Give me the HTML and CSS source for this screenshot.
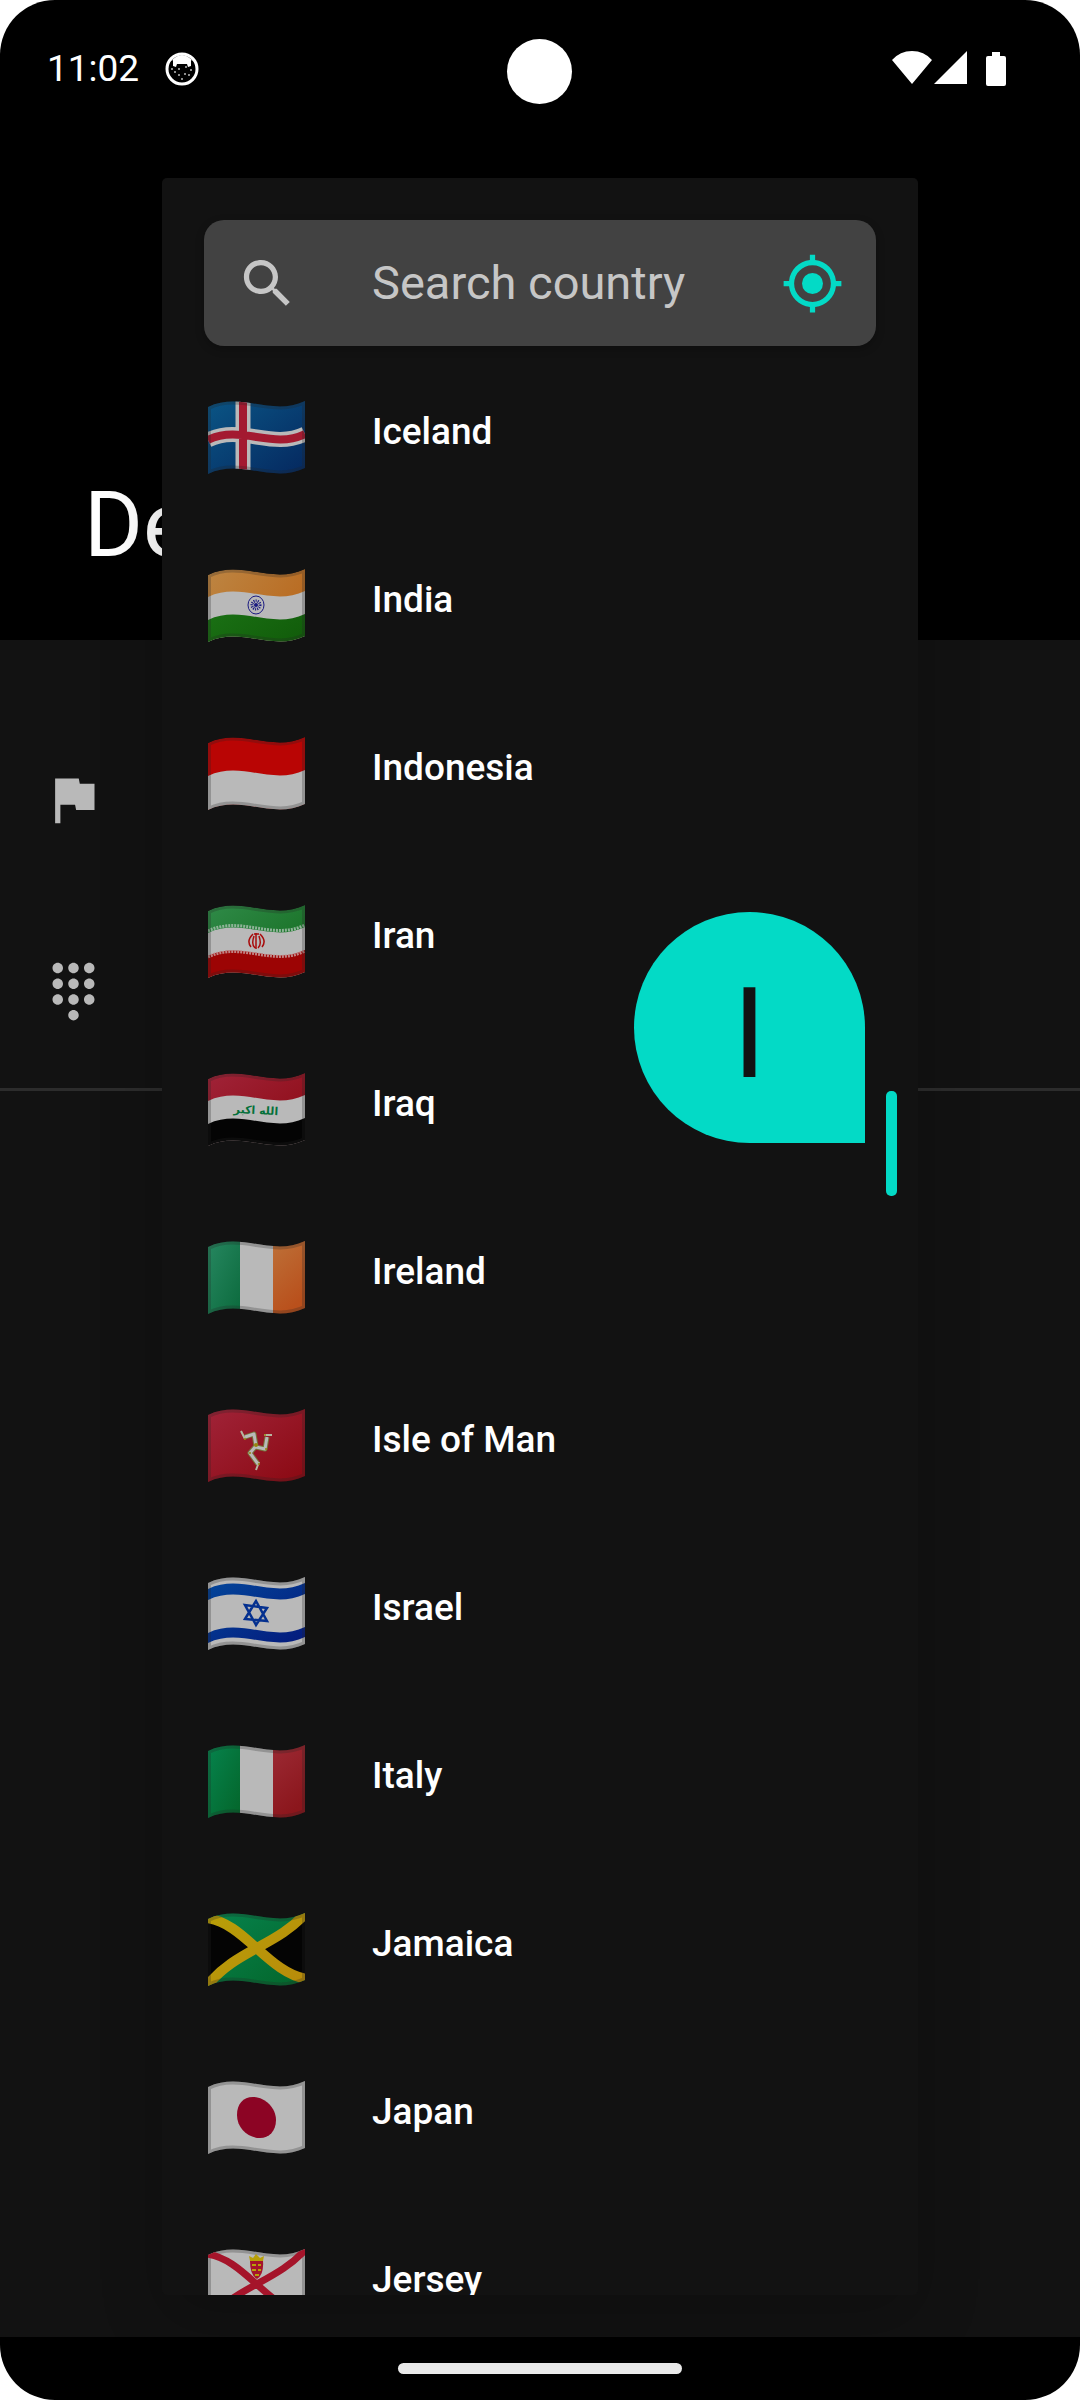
FILE: index.html
```html
<!DOCTYPE html>
<html lang="en">
<head>
<meta charset="utf-8">
<meta name="viewport" content="width=device-width, initial-scale=1">
<title>Search country</title>
<link rel="stylesheet" href="styles.css">
</head>
<body>
<svg class="defs" aria-hidden="true">
  <defs>
    <path id="wave" d="M0 6C33-10 64 16 97 0V67C64 83 33 57 0 73Z"/>
    <clipPath id="cloth"><use href="#wave"/></clipPath>
    <linearGradient id="blue" x2="1" y2="1"><stop stop-color="#0a5585"/><stop offset="1" stop-color="#05285f"/></linearGradient>
    <linearGradient id="orange" x2=".4" y2="1"><stop stop-color="#bd7038"/><stop offset="1" stop-color="#b9501c"/></linearGradient>
    <linearGradient id="saffron" x2="1" y2=".5"><stop stop-color="#bd8542"/><stop offset="1" stop-color="#b96a20"/></linearGradient>
    <linearGradient id="green" x2="1" y2="1"><stop stop-color="#1a7014"/><stop offset="1" stop-color="#0d5205"/></linearGradient>
    <linearGradient id="leaf" x2="1" y2="1"><stop stop-color="#2f8a48"/><stop offset="1" stop-color="#136a1c"/></linearGradient>
    <linearGradient id="irish" x2="1" y2="1"><stop stop-color="#268760"/><stop offset="1" stop-color="#0c6a3d"/></linearGradient>
    <linearGradient id="jade" x2="1" y2="1"><stop stop-color="#06834d"/><stop offset="1" stop-color="#04652a"/></linearGradient>
    <linearGradient id="crimson" x2="1" y2="1"><stop stop-color="#a02338"/><stop offset="1" stop-color="#8b0912"/></linearGradient>
    <linearGradient id="brick" x2=".4" y2="1"><stop stop-color="#9c2a34"/><stop offset="1" stop-color="#8b161c"/></linearGradient>
    <linearGradient id="navy" x2="1" y2="1"><stop stop-color="#03459a"/><stop offset="1" stop-color="#041a7c"/></linearGradient>
    <linearGradient id="gold" x2="1" y2="1"><stop stop-color="#b8a008"/><stop offset="1" stop-color="#b88a0a"/></linearGradient>
  </defs>
</svg>

<div class="screen">
  <header class="status">
    <div class="status-side">
      <time>11:02</time>
      <svg class="mascot" viewBox="0 0 34 34" aria-hidden="true">
        <circle cx="17" cy="17" r="15" fill="#000" stroke="#fff" stroke-width="3"/>
        <path fill="#fff" d="M6 9Q17-3 28 9L26 8 26 14 23 15 22 12H12L11 15 8 14 8 8Z"/>
        <g fill="#bbb"><circle cx="7" cy="17" r="1"/><circle cx="10" cy="20" r="1"/><circle cx="14" cy="17" r="1"/><circle cx="21" cy="15" r="1"/><circle cx="26" cy="18" r="1"/><circle cx="20" cy="22" r="1"/><circle cx="14" cy="23" r="1"/><circle cx="17" cy="27" r="1"/><circle cx="24" cy="23" r="1"/></g>
      </svg>
    </div>
    <span class="camera"></span>
    <svg class="signals" viewBox="0 0 116 36" aria-hidden="true">
      <path fill="#fff" d="M0 9Q8 0 20 0T40 9L20 33ZM75 0V33H42ZM102 1H108V5H112Q114 5 114 7V33Q114 35 112 35H96Q94 35 94 33V7Q94 5 96 5H100V1Z"/>
    </svg>
  </header>

  <div class="titlebar"><h1>De</h1></div>

  <main class="settings">
    <div class="setting"><svg class="icon" viewBox="0 0 24 24" aria-hidden="true"><path d="M14.4 6L14 4H5v17h2v-7h5.600l.4 2h7V6z"/></svg></div>
    <div class="setting"><svg class="icon" viewBox="0 0 24 24" aria-hidden="true"><path d="M12 19c-1.100 0-2 .9-2 2s.9 2 2 2 2-.9 2-2-.9-2-2-2zM6 1c-1.100 0-2 .9-2 2s.9 2 2 2 2-.9 2-2-.9-2-2-2zm0 6c-1.100 0-2 .9-2 2s.9 2 2 2 2-.9 2-2-.9-2-2-2zm0 6c-1.100 0-2 .9-2 2s.9 2 2 2 2-.9 2-2-.9-2-2-2zm12-8c1.100 0 2-.9 2-2s-.9-2-2-2-2 .9-2 2 .9 2 2 2zm-6 8c-1.100 0-2 .9-2 2s.9 2 2 2 2-.9 2-2-.9-2-2-2zm6 0c-1.100 0-2 .9-2 2s.9 2 2 2 2-.9 2-2-.9-2-2-2zm0-6c-1.100 0-2 .9-2 2s.9 2 2 2 2-.9 2-2-.9-2-2-2zm-6 0c-1.100 0-2 .9-2 2s.9 2 2 2 2-.9 2-2-.9-2-2-2zm0-6c-1.100 0-2 .9-2 2s.9 2 2 2 2-.9 2-2-.9-2-2-2z"/></svg></div>
  </main>

  <section class="dialog" role="dialog" aria-label="Search country">
    <div class="search">
      <label for="q" class="search-label"><svg class="icon" viewBox="0 0 24 24" aria-hidden="true"><path d="M15.500 14h-.79l-.28-.27C15.410 12.590 16 11.110 16 9.500 16 5.910 13.090 3 9.500 3S3 5.910 3 9.500 5.910 16 9.500 16c1.610 0 3.090-.59 4.230-1.570l.27.28v.79l5 4.990L20.490 19l-4.990-5zm-6 0C7.010 14 5 11.990 5 9.500S7.010 5 9.500 5 14 7.010 14 9.500 11.990 14 9.500 14z"/></svg></label>
      <input id="q" type="text" placeholder="Search country" aria-label="Search country">
      <button class="locate" type="button" aria-label="Use my location"><svg class="icon" viewBox="0 0 24 24" aria-hidden="true"><circle cx="12" cy="12" r="4"/><path d="M20.940 11c-.46-4.170-3.770-7.480-7.940-7.940V1h-2v2.060C6.830 3.520 3.520 6.830 3.060 11H1v2h2.060c.46 4.170 3.770 7.480 7.940 7.940V23h2v-2.060c4.170-.46 7.480-3.770 7.940-7.940H23v-2h-2.060zM12 19c-3.870 0-7-3.130-7-7s3.130-7 7-7 7 3.130 7 7-3.130 7-7 7z"/></svg></button>
    </div>

    <ul class="countries">
      <li><button class="country" type="button">
        <svg class="flag" viewBox="0 0 97 73" aria-hidden="true"><g clip-path="url(#cloth)"><path fill="url(#blue)" d="M0 0H97V73H0Z"/><path fill="none" stroke="#b9b9b9" stroke-width="15" d="M0 39C33 23 64 49 97 33M35 0V73"/><path fill="none" stroke="#a31a30" stroke-width="8" d="M0 39C33 23 64 49 97 33M35 0V73"/><use href="#wave" class="hem"/></g></svg>
        <span>Iceland</span></button></li>
      <li><button class="country" type="button">
        <svg class="flag" viewBox="0 0 97 73" aria-hidden="true"><g clip-path="url(#cloth)"><use href="#wave" fill="url(#saffron)"/><use href="#wave" y="22" fill="#b9b9b9"/><use href="#wave" y="45" fill="url(#green)"/><g fill="none" stroke="#1a1a80"><ellipse cx="48" cy="36" rx="8" ry="9"/><circle cx="48" cy="36" r="4" stroke-width="3" stroke-dasharray="1 1"/></g><circle cx="48" cy="36" r="2" fill="#1a1a80"/><use href="#wave" class="hem"/></g></svg>
        <span>India</span></button></li>
      <li><button class="country" type="button">
        <svg class="flag" viewBox="0 0 97 73" aria-hidden="true"><g clip-path="url(#cloth)"><use href="#wave" fill="#b90504"/><use href="#wave" y="33" fill="#b9b9b9"/><use href="#wave" class="hem"/></g></svg>
        <span>Indonesia</span></button></li>
      <li><button class="country" type="button">
        <svg class="flag" viewBox="0 0 97 73" aria-hidden="true"><g clip-path="url(#cloth)"><use href="#wave" fill="url(#leaf)"/><use href="#wave" y="22" fill="#b9b9b9"/><use href="#wave" y="45" fill="#9c0404"/><path fill="none" stroke="#8fb498" stroke-width="3" stroke-dasharray="2 1" d="M0 26C33 10 64 36 97 20"/><path fill="none" stroke="#c08484" stroke-width="3" stroke-dasharray="2 1" d="M0 52C33 36 64 62 97 46"/><path fill="none" stroke="#a80c0c" stroke-width="1.500" d="M48 28V44M45 29Q38 36 43 42M46 31Q43 40 47 43M52 29Q59 36 54 42M51 31Q54 40 50 43M46 29H51"/><use href="#wave" class="hem"/></g></svg>
        <span>Iran</span></button></li>
      <li><button class="country" type="button">
        <svg class="flag" viewBox="0 0 97 73" aria-hidden="true"><g clip-path="url(#cloth)"><use href="#wave" fill="url(#crimson)"/><use href="#wave" y="22" fill="#b9b9b9"/><use href="#wave" y="45" fill="#040404"/><text class="takbir" x="48" y="41" transform="rotate(3 48 37)">الله اكبر</text><use href="#wave" class="hem"/></g></svg>
        <span>Iraq</span></button></li>
      <li><button class="country" type="button">
        <svg class="flag" viewBox="0 0 97 73" aria-hidden="true"><g clip-path="url(#cloth)"><path fill="url(#irish)" d="M0 0H32V73H0Z"/><path fill="#b9b9b9" d="M32 0H65V73H32Z"/><path fill="url(#orange)" d="M65 0H97V73H65Z"/><use href="#wave" class="hem"/></g></svg>
        <span>Ireland</span></button></li>
      <li><button class="country" type="button">
        <svg class="flag" viewBox="0 0 97 73" aria-hidden="true"><g clip-path="url(#cloth)"><path fill="url(#crimson)" d="M0 0H97V73H0Z"/><g fill="none" stroke-linejoin="round"><path stroke="#77753c" stroke-width="5" d="M48 37L46 25 37 28M48 38L57 40 59 28M48 37L42 44 50 55"/><path stroke="#b9b9b9" stroke-width="3" d="M48 37L46 25 37 28M48 38L57 40 59 28M48 37L42 44 50 55"/><path stroke="#b5b5a0" stroke-width="2" d="M37 30L33 22M56 26L64 26M51 53L48 61"/></g><g fill="#96850e"><circle cx="48" cy="36" r="2"/><circle cx="37" cy="30" r="1"/><circle cx="57" cy="26" r="1"/><circle cx="51" cy="55" r="1"/><circle cx="58" cy="40" r="1"/><circle cx="42" cy="44" r="1"/></g><use href="#wave" class="hem"/></g></svg>
        <span>Isle of Man</span></button></li>
      <li><button class="country" type="button">
        <svg class="flag" viewBox="0 0 97 73" aria-hidden="true"><g clip-path="url(#cloth)"><path fill="#b9b9b9" d="M0 0H97V73H0Z"/><path fill="url(#navy)" d="M0 12C33-4 64 22 97 6V17C64 33 33 7 0 23ZM0 56C33 40 64 66 97 50V60C64 76 33 50 0 66Z"/><path fill="none" stroke="#04308f" stroke-width="2.500" d="M48 24L59 44 37 42ZM48 48L37 28 59 31Z"/><use href="#wave" class="hem"/></g></svg>
        <span>Israel</span></button></li>
      <li><button class="country" type="button">
        <svg class="flag" viewBox="0 0 97 73" aria-hidden="true"><g clip-path="url(#cloth)"><path fill="url(#jade)" d="M0 0H32V73H0Z"/><path fill="#b9b9b9" d="M32 0H65V73H32Z"/><path fill="url(#brick)" d="M65 0H97V73H65Z"/><use href="#wave" class="hem"/></g></svg>
        <span>Italy</span></button></li>
      <li><button class="country" type="button">
        <svg class="flag" viewBox="0 0 97 73" aria-hidden="true"><g clip-path="url(#cloth)"><path fill="url(#jade)" d="M0 0H97V73H0Z"/><path fill="#040404" d="M0 8Q22 14 44 35 16 50 0 68ZM97 4Q82 24 53 35 74 56 97 63Z"/><path fill="none" stroke="url(#gold)" stroke-width="10" d="M-2 5C36 9 60 60 99 66M-2 74C28 36 68 34 99 -1"/><use href="#wave" class="hem"/></g></svg>
        <span>Jamaica</span></button></li>
      <li><button class="country" type="button">
        <svg class="flag" viewBox="0 0 97 73" aria-hidden="true"><g clip-path="url(#cloth)"><path fill="#b9b9b9" d="M0 0H97V73H0Z"/><path fill="#8c0424" d="M45 16C57 16 68 27 68 39 68 50 61 57 52 57 40 57 29 47 29 34 29 23 35 16 45 16Z"/><use href="#wave" class="hem"/></g></svg>
        <span>Japan</span></button></li>
      <li><button class="country" type="button">
        <svg class="flag" viewBox="0 0 97 73" aria-hidden="true"><g clip-path="url(#cloth)"><path fill="#b9b9b9" d="M0 0H97V73H0Z"/><use href="#wave" class="hem"/><path fill="none" stroke="#a5142a" stroke-width="7" d="M-2 5C36 9 60 60 99 66M-2 74C28 36 68 34 99 -1"/><path fill="#a5142a" d="M42 12H55Q56 26 49 30 42 26 42 12Z"/><path fill="#b8a008" d="M42 12L41 7 45 9 48 5 52 9 56 7 55 12ZM44 15H48V17H44ZM50 15H53V17H50ZM44 20H48V22H44ZM50 20H53V22H50ZM47 25H51V27H47Z"/></g></svg>
        <span>Jersey</span></button></li>
    </ul>

    <div class="bubble">I</div>
    <div class="thumb"></div>
  </section>

  <footer class="navbar"><span class="handle"></span></footer>
</div>
</body>
</html>
```

FILE: styles.css
```css
* {
  box-sizing: border-box;
}

body {
  margin: 0;
  background: #fff;
  color: #fff;
  font-family: Roboto, "Liberation Sans", sans-serif;
}

button,
input {
  border: 0;
  padding: 0;
  background: none;
  color: inherit;
  font: inherit;
}

.defs {
  position: absolute;
  width: 0;
  height: 0;
}

.screen {
  position: relative;
  display: flex;
  flex-direction: column;
  height: 100vh;
  overflow: hidden;
  border-radius: 55px;
  background: #000;
}

/* Status bar */
.status {
  display: grid;
  grid-template-columns: 1fr auto 1fr;
  align-items: center;
  height: 142px;
  padding: 0 72px 0 47px;
}

.status-side {
  display: flex;
  align-items: center;
  gap: 26px;
  padding-bottom: 4px;
  font-size: 37px;
  line-height: 44px;
}

.mascot {
  width: 34px;
  height: 34px;
}

.camera {
  width: 65px;
  height: 65px;
  margin-left: 24px;
  border-radius: 50%;
  background: #fff;
}

.signals {
  width: 116px;
  height: 36px;
  margin-bottom: 4px;
  justify-self: end;
}

/* Page behind the dialog */
.titlebar {
  display: flex;
  align-items: flex-end;
  height: 498px;
  padding: 0 84px 60px;
}

.titlebar h1 {
  margin: 0;
  font-size: 90px;
  font-weight: 400;
  line-height: 108px;
}

.settings {
  flex: 1;
  padding-top: 63px;
  background: #121212;
}

.setting {
  display: flex;
  align-items: center;
  height: 192px;
  padding-left: 42px;
  color: #b9b9b9;
}

.setting:last-child {
  height: 196px;
  border-bottom: 3px solid #2c2c2c;
}

.icon {
  display: block;
  width: 63px;
  height: 63px;
  fill: currentColor;
}

.navbar {
  display: flex;
  align-items: center;
  justify-content: center;
  height: 63px;
}

.handle {
  width: 284px;
  height: 11px;
  border-radius: 6px;
  background: #ececec;
}

/* Country picker */
.dialog {
  position: absolute;
  inset: 178px 15% 105px;
  display: flex;
  flex-direction: column;
  padding-top: 42px;
  overflow: hidden;
  border-radius: 5px;
  background: #121212;
  box-shadow: 0 24px 64px rgba(0, 0, 0, 0.2);
}

.search {
  display: flex;
  align-items: center;
  flex: none;
  height: 126px;
  margin: 0 42px;
  padding: 0 32px;
  border-radius: 20px;
  background: #424242;
  color: #c6c6c6;
  box-shadow: 0 3px 8px rgba(0, 0, 0, 0.25);
}

.search input {
  flex: 1;
  min-width: 0;
  margin-left: 73px;
  font-size: 47px;
  line-height: 56px;
  outline: 0;
}

.search input::placeholder {
  color: #c6c6c6;
  opacity: 1;
}

.locate {
  color: #03dac6;
}

.countries {
  flex: 1;
  min-height: 0;
  margin: 0;
  padding: 0;
  overflow: hidden;
  list-style: none;
}

.country {
  display: flex;
  align-items: center;
  gap: 67px;
  width: 100%;
  height: 168px;
  padding: 4px 0 0 46px;
  font-size: 37px;
  font-weight: 500;
  line-height: 44px;
  text-align: left;
}

.flag {
  width: 97px;
  height: 73px;
  margin-top: 10px;
}

.hem {
  fill: none;
  stroke: #222;
  stroke-opacity: 0.25;
  stroke-width: 6px;
}

.takbir {
  fill: #04703a;
  font-family: "DejaVu Sans", sans-serif;
  font-size: 11px;
  font-weight: 700;
  text-anchor: middle;
}

/* Fast scroller, floating over the list */
.bubble {
  position: absolute;
  top: 734px;
  right: 53px;
  width: 231px;
  height: 231px;
  border-radius: 50% 50% 0 50%;
  background: #03dac6;
  color: #121212;
  font-size: 126px;
  line-height: 244px;
  text-align: center;
}

.thumb {
  position: absolute;
  top: 913px;
  right: 21px;
  width: 11px;
  height: 105px;
  border-radius: 5px;
  background: #03dac6;
}
```
